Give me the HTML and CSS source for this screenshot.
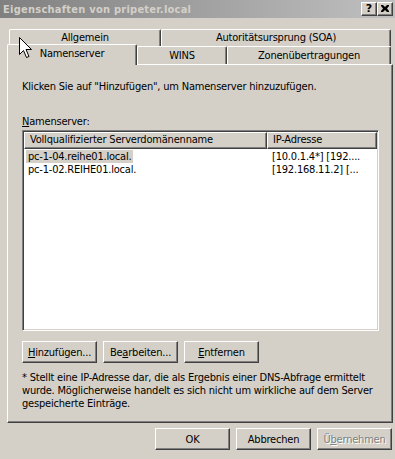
FILE: index.html
```html
<!DOCTYPE html>
<html lang="de">
<head>
<meta charset="utf-8">
<title>Eigenschaften von pripeter.local</title>
<link rel="stylesheet" href="styles.css">
</head>
<body>
<div class="window">
  <div class="titlebar">
    <span class="title">Eigenschaften von pripeter.local</span>
    <div class="caption-btns">
      <span class="cbtn">?</span>
      <span class="cbtn cbtn-x">
        <svg width="8" height="7" viewBox="0 0 8 7"><path d="M0 0h2l2 2 2-2h2v1L6 3.5 8 6v1H6L4 5 2 7H0V6l2-2.5L0 1z" fill="#000"/></svg>
      </span>
    </div>
  </div>
  <div class="content">
    <div class="tabs">
      <div class="tabrow row1">
        <div class="tab t-allg">Allgemein</div>
        <div class="tab t-soa">Autoritätsursprung (SOA)</div>
      </div>
      <div class="tabrow row2">
        <div class="tab sel t-ns">Namenserver</div>
        <div class="tab t-wins">WINS</div>
        <div class="tab t-zone">Zonenübertragungen</div>
      </div>
    </div>
    <div class="panel">
      <p class="intro">Klicken Sie auf "Hinzufügen", um Namenserver hinzuzufügen.</p>
      <p class="label"><u>N</u>amenserver:</p>
      <div class="listbox">
        <div class="lv-header">
          <div class="lv-col c1">Vollqualifizierter Serverdomänenname</div>
          <div class="lv-col c2">IP-Adresse</div>
        </div>
        <div class="lv-row">
          <div class="lv-cell c1"><span class="selbg">pc-1-04.reihe01.local.</span></div>
          <div class="lv-cell c2">[10.0.1.4*] [192....</div>
        </div>
        <div class="lv-row">
          <div class="lv-cell c1"><span class="nobg">pc-1-02.REIHE01.local.</span></div>
          <div class="lv-cell c2">[192.168.11.2] [...</div>
        </div>
      </div>
      <div class="btnrow">
        <button class="btn"><u>H</u>inzufügen...</button>
        <button class="btn">Be<u>a</u>rbeiten...</button>
        <button class="btn"><u>E</u>ntfernen</button>
      </div>
      <p class="note">* Stellt eine IP-Adresse dar, die als Ergebnis einer DNS-Abfrage ermittelt wurde. Möglicherweise handelt es sich nicht um wirkliche auf dem Server gespeicherte Einträge.</p>
    </div>
    <div class="footer">
      <button class="btn">OK</button>
      <button class="btn">Abbrechen</button>
      <button class="btn disabled">Ü<u>b</u>ernehmen</button>
    </div>
  </div>
  <svg class="cursor" width="13" height="21" viewBox="0 0 13 21">
    <path d="M0.5 0.5V17.5L4.5 13.5L7.5 20.5L10 19.5L7 12.5H12.5Z" fill="#fff" stroke="#000" stroke-width="1" stroke-linejoin="miter"/>
  </svg>
</div>
</body>
</html>
```
FILE: styles.css
```css
* { box-sizing: border-box; }
html, body { margin: 0; padding: 0; }
body {
  background: #d4d0c8;
  font-family: "DejaVu Sans Condensed", "Liberation Sans", sans-serif;
  font-size: 11px;
  letter-spacing: -0.2px;
  color: #000;
}
.window {
  position: relative;
  width: 395px;
  height: 459px;
  background: #d4d0c8;
  overflow: hidden;
}
.titlebar {
  height: 18px;
  background: linear-gradient(to right, #808080, #c0c0c0);
  display: flex;
  align-items: center;
  justify-content: space-between;
  padding: 0 2px 0 3px;
}
.title {
  color: #d4d0c8;
  font-weight: bold;
  font-size: 11px;
  letter-spacing: 0.25px;
}
.caption-btns { display: flex; gap: 0; margin-top: -1px; }
.cbtn {
  width: 16px;
  height: 14px;
  background: #d4d0c8;
  border-top: 1px solid #fff;
  border-left: 1px solid #fff;
  border-right: 1px solid #404040;
  border-bottom: 1px solid #404040;
  box-shadow: inset -1px -1px 0 #808080;
  display: flex;
  align-items: center;
  justify-content: center;
  font-family: "DejaVu Sans", sans-serif;
  font-weight: bold;
  font-size: 11px;
  line-height: 1;
  letter-spacing: 0;
}
.content { padding: 11px 2px 0 7px; }
.tabs { position: relative; }
.tabrow { display: flex; }
.row1 { padding-left: 2px; height: 17px; }
.row2 { height: 18px; align-items: flex-end; }
.tab {
  height: 18px;
  background: #d4d0c8;
  border-top: 1px solid #fff;
  border-left: 1px solid #fff;
  border-right: 1px solid #404040;
  box-shadow: inset -1px 0 0 #808080;
  border-radius: 2px 2px 0 0;
  display: flex;
  align-items: center;
  justify-content: center;
  padding-bottom: 1px;
  flex: none;
}
.row1 .tab { height: 17px; }
.t-allg { width: 152px; }
.t-soa { width: 230px; }
.t-ns { width: 130px; }
.t-wins { width: 90px; }
.t-zone { width: 164px; }
.tab.sel {
  position: relative;
  z-index: 2;
  height: 21px;
  margin-bottom: -1px;
  padding-bottom: 3px;
}
.panel {
  position: relative;
  height: 359px;
  background: #d4d0c8;
  border-top: 1px solid #fff;
  border-left: 1px solid #fff;
  border-right: 1px solid #404040;
  border-bottom: 1px solid #404040;
  box-shadow: inset -1px -1px 0 #808080;
  padding: 15px 0 0 14px;
}
p { margin: 0; line-height: 13px; }
.label { margin-top: 22px; }
.listbox {
  margin-top: 2px;
  width: 357px;
  height: 201px;
  background: #fff;
  border-top: 1px solid #808080;
  border-left: 1px solid #808080;
  border-right: 1px solid #fff;
  border-bottom: 1px solid #fff;
  box-shadow: inset 1px 1px 0 #404040, inset -1px -1px 0 #d4d0c8;
  padding: 1px 1px 0 1px;
}
.lv-header { display: flex; height: 17px; }
.lv-col {
  background: #d4d0c8;
  border-top: 1px solid #fff;
  border-left: 1px solid #fff;
  border-right: 1px solid #404040;
  border-bottom: 1px solid #404040;
  box-shadow: inset -1px -1px 0 #808080;
  padding-left: 5px;
  line-height: 14px;
  white-space: nowrap;
  overflow: hidden;
}
.c1 { width: 243px; }
.c2 { width: 110px; }
.lv-row { display: flex; height: 13px; line-height: 13px; }
.lv-header + .lv-row { margin-top: 1px; }
.lv-cell { white-space: nowrap; overflow: hidden; }
.lv-cell.c1 { padding-left: 2px; }
.lv-cell.c2 { padding-left: 5px; }
.selbg, .nobg { display: inline-block; padding: 0 2px; }
.selbg { background: #d4d0c8; }
.btnrow { display: flex; gap: 6px; margin-top: 10px; }
.btn {
  width: 75px;
  height: 22px;
  background: #d4d0c8;
  font-family: inherit;
  font-size: 11px;
  letter-spacing: inherit;
  color: #000;
  border-top: 1px solid #fff;
  border-left: 1px solid #fff;
  border-right: 1px solid #404040;
  border-bottom: 1px solid #404040;
  box-shadow: inset -1px -1px 0 #808080;
  padding: 0;
  margin: 0;
  flex: none;
}
.btn.disabled { color: #808080; text-shadow: 1px 1px 0 #fff; }
.note { margin-top: 8px; width: 366px; }
.footer {
  display: flex;
  justify-content: flex-end;
  gap: 6px;
  padding: 5px 1px 0 0;
}
.cursor {
  position: absolute;
  z-index: 10;
  left: 19px;
  top: 37px;
}
```
